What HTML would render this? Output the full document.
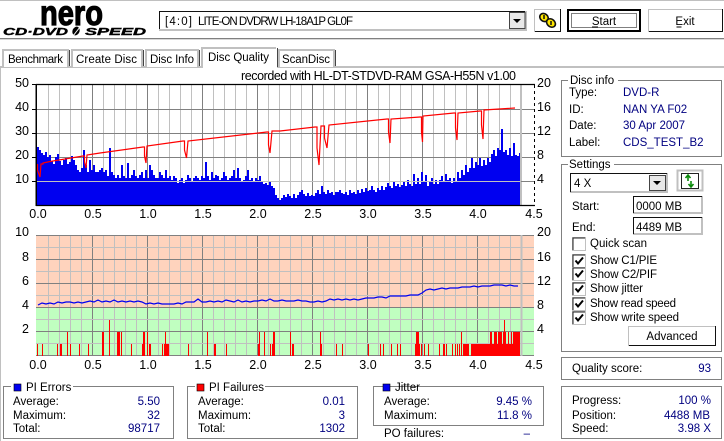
<!DOCTYPE html>
<html><head><meta charset="utf-8"><style>
html,body{margin:0;padding:0;background:#fff;width:724px;height:441px;overflow:hidden}
svg{display:block}
text{font-family:"Liberation Sans",sans-serif;font-size:11.5px;fill:#000}
.v{fill:#000080}
.e{text-anchor:end}
.m{text-anchor:middle}
.a{font-size:12.5px}
.b{fill:#fff;stroke:#808080;stroke-width:1}
</style></head><body>
<svg width="724" height="441" viewBox="0 0 724 441" xmlns="http://www.w3.org/2000/svg">
<defs>
<path id="minor" fill="none" stroke="#c0c0c0" d="M48.5 0v121M59.5 0v121M70.5 0v121M81.5 0v121M103.5 0v121M114.5 0v121M125.5 0v121M136.5 0v121M158.5 0v121M169.5 0v121M180.5 0v121M191.5 0v121M213.5 0v121M224.5 0v121M235.5 0v121M246.5 0v121M268.5 0v121M279.5 0v121M290.5 0v121M301.5 0v121M323.5 0v121M334.5 0v121M345.5 0v121M356.5 0v121M378.5 0v121M389.5 0v121M400.5 0v121M411.5 0v121M433.5 0v121M444.5 0v121M455.5 0v121M466.5 0v121M488.5 0v121M499.5 0v121M510.5 0v121"/>
<path id="major" fill="none" stroke="#808080" d="M92.5 0v121M147.5 0v121M202.5 0v121M257.5 0v121M312.5 0v121M367.5 0v121M422.5 0v121M477.5 0v121"/>
<g id="chk"><rect x="0.5" y="0.5" width="13" height="13" fill="#fff" stroke="#c0c0c0"/><path d="M1 13V1H13" fill="none" stroke="#222"/><path d="M3.5 6.500l2.500 3 5-6" fill="none" stroke="#000" stroke-width="2"/></g>
</defs>

<!-- window frame -->
<rect x="0" y="0" width="724" height="1" fill="#c0c0c0"/>
<rect x="0" y="38" width="724" height="1" fill="#808080"/>
<rect x="0" y="39" width="724" height="1" fill="#d8d8d8"/>
<rect x="0" y="66" width="724" height="2" fill="#c0c0c0"/>
<rect x="0" y="66" width="1" height="375" fill="#c0c0c0"/>

<!-- logo -->
<text x="40" y="25" textLength="63" lengthAdjust="spacingAndGlyphs" style="font-size:35px;font-weight:bold;stroke:#000;stroke-width:1.2px">nero</text>
<text x="3" y="35" textLength="65" lengthAdjust="spacingAndGlyphs" style="font-size:10px;font-weight:bold;font-style:italic;stroke:#000;stroke-width:.4px">CD·DVD</text>
<ellipse cx="76" cy="31" rx="3.500" ry="4.500" transform="rotate(25 76 31)" fill="#000"/>
<path d="M73 36L80 27" stroke="#fff" stroke-width="1"/>
<text x="85" y="35" textLength="61" lengthAdjust="spacingAndGlyphs" style="font-size:10px;font-weight:bold;font-style:italic;stroke:#000;stroke-width:.4px">SPEED</text>

<!-- drive combo -->
<rect x="159" y="11" width="368" height="20" fill="#c0c0c0"/>
<rect x="159" y="11" width="366" height="18" fill="#fff"/>
<path d="M159.500 29V11.500H525" fill="none" stroke="#111"/>
<text x="165" y="25" textLength="27">[4:0]</text>
<text x="198" y="25" textLength="155">LITE-ON DVDRW LH-18A1P GL0F</text>
<rect x="509" y="12" width="16" height="17" fill="#e8e8e8"/>
<path d="M509.500 29V12.500H525M509.500 28.500H525V12" fill="none" stroke="#444"/>
<path d="M513 19h8l-4 4z" fill="#000"/>

<!-- link button -->
<rect x="534.500" y="9.500" width="26" height="22" fill="#fff" stroke="#c0c0c0"/>
<path d="M535 31.500H560.500V9" fill="none" stroke="#111"/>
<g fill="#ffe600" stroke="#111" stroke-width="1.600">
<ellipse cx="544" cy="17.500" rx="4.500" ry="3.800" transform="rotate(40 544 17.500)"/>
<ellipse cx="551" cy="23" rx="4.800" ry="3.800" transform="rotate(40 551 23)"/>
</g>
<path d="M544 15v4M551 21v4" stroke="#111" stroke-width="1.500" fill="none"/>

<!-- start -->
<rect x="568" y="10" width="72" height="21" fill="#fff" stroke="#000" stroke-width="2"/>
<rect x="571.500" y="13.500" width="65" height="14" fill="none" stroke="#000" stroke-dasharray="1 1"/>
<text x="604" y="25" class="m">Start</text>
<path d="M592 27h6" stroke="#000"/>
<!-- exit -->
<rect x="648.500" y="9.500" width="74" height="22" fill="#fff" stroke="#c0c0c0"/>
<path d="M649 31.500H722.500V9" fill="none" stroke="#111"/>
<text x="685" y="25" class="m">Exit</text>
<path d="M676.500 27h5" stroke="#000"/>

<!-- tabs -->
<g fill="#fff" stroke="#c0c0c0" stroke-width="2">
<path d="M3 67V50H68V67"/>
<path d="M72 67V50H142V67"/>
<path d="M146 67V50H198V67"/>
<path d="M279 67V50H334V67"/>
</g>
<path d="M69.500 50V66M143.500 50V66M199.500 50V66M335.500 50V66" stroke="#444" fill="none"/>
<rect x="201" y="47" width="76" height="21" fill="#fff"/>
<path d="M202 68V48H276" fill="none" stroke="#c0c0c0" stroke-width="2"/>
<path d="M277.500 48V67" stroke="#444"/>
<text x="8" y="63" textLength="55">Benchmark</text>
<text x="76" y="63" textLength="61">Create Disc</text>
<text x="150" y="63" textLength="44">Disc Info</text>
<text x="208" y="61" textLength="61">Disc Quality</text>
<text x="282" y="63" textLength="48">ScanDisc</text>

<!-- chart 1 -->
<text x="241" y="80" textLength="275" class="a">recorded with HL-DT-STDVD-RAM GSA-H55N v1.00</text>
<use href="#minor" y="85"/>
<use href="#major" y="85"/>
<path d="M36 109.500H534M36 133.500H534M36 157.500H534" stroke="#808080" fill="none"/>
<path fill="#0000f0" d="M37 206V147h2V150h2V153h2V155h2V152h2V157h2V155h2V161h2V164h2V157h2V154h2V161h2V165h2V160h2V158h2V164h2V162h2V156h2V160h2V165h2V170h2V172h2V168h2V150h2V165h2V172h2V160h2V170h2V165h2V172h2V172h2V170h2V168h2V172h2V170h2V176h2V148h2V172h2V175h2V178h2V175h2V178h2V165h2V176h2V178h2V163h2V178h2V175h2V170h2V176h2V178h2V175h2V172h2V178h2V170h2V178h2V165h2V170h2V175h2V178h2V178h2V172h2V175h2V178h2V170h2V178h2V176h2V180h2V176h2V178h2V183h2V180h2V178h2V183h2V180h2V175h2V178h2V182h2V178h2V176h2V178h2V180h2V176h2V178h2V162h2V176h2V180h2V172h2V178h2V175h2V176h2V180h2V178h2V172h2V176h2V180h2V178h2V176h2V170h2V178h2V168h2V178h2V182h2V180h2V176h2V170h2V180h2V178h2V182h2V178h2V180h2V176h2V182h2V184h2V183h2V185h2V181h2V186h2V188h2V195h2V198h2V200h2V198h2V195h2V197h2V194h2V196h2V198h2V194h2V198h2V195h2V192h2V190h2V194h2V196h2V193h2V196h2V195h2V196h2V193h2V190h2V194h2V186h2V192h2V194h2V190h2V193h2V192h2V195h2V192h2V192h2V190h2V193h2V194h2V192h2V195h2V190h2V193h2V192h2V194h2V190h2V193h2V189h2V192h2V188h2V191h2V190h2V186h2V190h2V192h2V188h2V190h2V186h2V190h2V187h2V183h2V186h2V188h2V182h2V186h2V184h2V187h2V185h2V182h2V186h2V180h2V184h2V186h2V174h2V184h2V178h2V184h2V172h2V182h2V175h2V186h2V182h2V178h2V184h2V180h2V184h2V180h2V176h2V182h2V174h2V180h2V178h2V183h2V178h2V181h2V172h2V178h2V170h2V175h2V165h2V172h2V168h2V158h2V168h2V162h2V165h2V158h2V166h2V160h2V165h2V158h2V162h2V154h2V150h2V156h2V148h2V150h2V129h2V152h2V150h2V155h2V148h2V156h2V143h2V155h2V156h2V153h2V206z"/>
<path d="M36 181.500H521" stroke="#c0c0c0" fill="none"/>
<rect x="520" y="85" width="2" height="121" fill="#c0c0c0"/>
<path d="M534 181.500H521" stroke="#808080"/>
<path fill="none" stroke="#f00" stroke-width="1.200" d="M37.500 164V170L40 177L41 164H43V163L50 161.500L83 156H84.500V162L86 168L87 155L100 153L143 147H144.500V156L146 163L147 146L183 141H184.500V150L186.500 158L188 141L267 132H268.500V145L270 153L272 131L280 131L315 127H317V148L319 165L321 126H324.500V138L327 148L329 125L387 119H388.500V132L390 143L391 119L420 117H421.500V132L422.500 142L423 116L454 113H455.500V128L457 140L458 113L480 111H481.500V125L483 139L484 110L515 108"/>
<path d="M36 84.500H535M36 205.500H535" stroke="#000" fill="none" stroke-width="1.300"/>
<rect x="35.500" y="84" width="1.500" height="122" fill="#000"/>
<path d="M534.500 85V206" stroke="#000" stroke-dasharray="3 3"/>
<path d="M32 84.500h4M32 109.500h4M32 133.500h4M32 157.500h4M32 181.500h4" stroke="#000"/>
<text x="29" y="87" class="a e">50</text><text x="29" y="111" class="a e">40</text><text x="29" y="135" class="a e">30</text><text x="29" y="159" class="a e">20</text><text x="29" y="183" class="a e">10</text>
<text x="537" y="87" class="a">20</text><text x="537" y="111" class="a">16</text><text x="537" y="135" class="a">12</text><text x="537" y="159" class="a">8</text><text x="537" y="183" class="a">4</text>
<text x="38" y="218" class="a m">0.0</text><text x="93" y="218" class="a m">0.5</text><text x="148" y="218" class="a m">1.0</text><text x="203" y="218" class="a m">1.5</text><text x="258" y="218" class="a m">2.0</text><text x="313" y="218" class="a m">2.5</text><text x="368" y="218" class="a m">3.0</text><text x="423" y="218" class="a m">3.5</text><text x="478" y="218" class="a m">4.0</text><text x="534" y="218" class="a m">4.5</text>

<!-- chart 2 -->
<rect x="36" y="235" width="498" height="73" fill="#ffd3bd"/>
<rect x="36" y="308" width="498" height="48" fill="#c0ffc0"/>
<use href="#minor" y="235"/>
<use href="#major" y="235"/>
<path d="M36 247.500H534M36 271.500H534M36 295.500H534M36 319.500H534M36 343.500H534" stroke="#c0c0c0" fill="none"/>
<path d="M36 235.500H534M36 259.500H534M36 283.500H534M36 307.500H534M36 331.500H534M36 355.500H534" stroke="#808080" fill="none"/>
<rect x="520.500" y="235" width="2" height="121" fill="#c0c0c0"/>
<path fill="#f00" d="M37 344h1v12h-1zM42 344h1v12h-1zM57 344h1v12h-1zM60 344h2v12h-2zM70 344h1v12h-1zM79 344h1v12h-1zM88 344h1v12h-1zM67 332h1v24h-1zM102 332h2v24h-2zM109 320h1v36h-1zM117 332h3v24h-3zM121 332h1v24h-1zM131 344h1v12h-1zM142 344h1v12h-1zM143 332h2v24h-2zM147 332h1v24h-1zM149 344h2v12h-2zM162 344h1v12h-1zM165 332h1v24h-1zM164 344h5v12h-5zM188 344h1v12h-1zM207 332h1v24h-1zM214 344h2v12h-2zM226 344h1v12h-1zM258 344h2v12h-2zM259 332h1v24h-1zM264 332h1v24h-1zM270 344h1v12h-1zM272 344h3v12h-3zM273 332h2v24h-2zM290 332h1v24h-1zM292 344h2v12h-2zM320 332h1v24h-1zM321 344h1v12h-1zM336 344h1v12h-1zM342 344h1v12h-1zM368 344h1v12h-1zM380 344h1v12h-1zM383 344h1v12h-1zM391 344h1v12h-1zM397 344h1v12h-1zM400 344h1v12h-1zM415 344h5v12h-5zM416 332h3v24h-3zM421 344h1v12h-1zM424 344h1v12h-1zM428 344h1v12h-1zM439 344h1v12h-1zM443 344h2v12h-2zM446 344h1v12h-1zM452 344h1v12h-1zM455 344h1v12h-1zM457 344h1v12h-1zM459 344h1v12h-1zM461 332h1v24h-1zM463 344h6v12h-6zM471 344h49v12h-49zM490 332h2v12h-2zM494 332h3v12h-3zM498 332h4v12h-4zM503 332h3v12h-3zM504 320h1v12h-1zM508 332h1v12h-1zM511 332h1v12h-1zM513 332h7v12h-7z"/>
<polyline fill="none" stroke="#0000f0" stroke-width="1.200" points="38,305 42,303 46,304 50,303 54,304 58,302 62,303 66,302 70,302 74,303 78,302 82,303 86,302 90,301 94,302 98,300 102,302 106,301 110,302 114,300 118,302 122,301 126,302 130,301 134,302 138,301 142,302 146,304 150,303 154,304 158,303 162,304 166,304 170,304 174,304 178,303 182,304 186,302 190,302 194,302 198,299 202,302 206,302 210,301 214,302 218,301 222,302 226,300 230,301 234,302 238,300 242,302 246,301 250,302 254,301 258,301 262,300 266,301 270,299 274,301 278,301 282,300 286,301 290,301 294,301 298,300 302,301 306,301 310,302 314,302 318,301 322,302 326,301 330,299 334,300 338,299 342,300 346,299 350,300 354,299 358,300 362,299 366,298 370,298 374,298 378,297 382,297 386,298 390,296 394,296 398,296 402,296 406,296 410,295 414,295 418,295 422,293 426,290 430,289 434,290 438,289 442,288 446,289 450,288 454,288 458,288 462,287 466,287 470,287 474,286 478,287 482,286 486,286 490,286 494,285 498,285 502,285 506,286 510,285 514,286 518,286"/>
<text x="29" y="236" class="a e">10</text><text x="29" y="261" class="a e">8</text><text x="29" y="285" class="a e">6</text><text x="29" y="309" class="a e">4</text><text x="29" y="333" class="a e">2</text>
<text x="537" y="236" class="a">20</text><text x="537" y="261" class="a">16</text><text x="537" y="285" class="a">12</text><text x="537" y="309" class="a">8</text><text x="537" y="333" class="a">4</text>
<text x="38" y="369" class="a m">0.0</text><text x="93" y="369" class="a m">0.5</text><text x="148" y="369" class="a m">1.0</text><text x="203" y="369" class="a m">1.5</text><text x="258" y="369" class="a m">2.0</text><text x="313" y="369" class="a m">2.5</text><text x="368" y="369" class="a m">3.0</text><text x="423" y="369" class="a m">3.5</text><text x="478" y="369" class="a m">4.0</text><text x="534" y="369" class="a m">4.5</text>

<!-- bottom groups -->
<rect class="b" x="3.500" y="386.500" width="170" height="52"/>
<rect x="11" y="380" width="62" height="12" fill="#fff"/>
<rect x="14" y="384" width="7" height="7" fill="#0000f0" stroke="#000" stroke-width=".6"/>
<text x="26" y="391">PI Errors</text>
<text x="13" y="405">Average:</text><text x="13" y="419">Maximum:</text><text x="13" y="432">Total:</text>
<text x="160" y="405" class="v e">5.50</text><text x="160" y="419" class="v e">32</text><text x="160" y="432" class="v e">98717</text>

<rect class="b" x="187.500" y="386.500" width="170" height="52"/>
<rect x="195" y="380" width="70" height="12" fill="#fff"/>
<rect x="197" y="384" width="7" height="7" fill="#f00" stroke="#000" stroke-width=".6"/>
<text x="209" y="391">PI Failures</text>
<text x="198" y="405">Average:</text><text x="198" y="419">Maximum:</text><text x="198" y="432">Total:</text>
<text x="345" y="405" class="v e">0.01</text><text x="345" y="419" class="v e">3</text><text x="345" y="432" class="v e">1302</text>

<rect class="b" x="373.500" y="386.500" width="170" height="39"/>
<rect x="380" y="380" width="42" height="6" fill="#fff"/>
<rect x="383" y="384" width="7" height="7" fill="#0000f0" stroke="#000" stroke-width=".6"/>
<text x="395" y="391">Jitter</text>
<text x="384" y="405">Average:</text><text x="384" y="419">Maximum:</text>
<text x="532" y="405" class="v e">9.45 %</text><text x="532" y="419" class="v e">11.8 %</text>
<text x="384" y="437">PO failures:</text><text x="530" y="437" class="v e">–</text>

<!-- disc info -->
<rect class="b" x="561.500" y="80.500" width="160" height="76"/>
<rect x="568" y="75" width="50" height="10" fill="#fff"/>
<text x="570" y="84">Disc info</text>
<text x="569" y="96">Type:</text><text x="569" y="113">ID:</text><text x="569" y="129">Date:</text><text x="569" y="146">Label:</text>
<text x="623" y="96" class="v">DVD-R</text><text x="623" y="113" class="v">NAN YA F02</text><text x="623" y="129" class="v">30 Apr 2007</text><text x="623" y="146" class="v">CDS_TEST_B2</text>

<!-- settings -->
<rect class="b" x="561.500" y="164.500" width="160" height="187"/>
<rect x="568" y="159" width="46" height="10" fill="#fff"/>
<text x="569" y="168">Settings</text>
<rect x="570" y="173" width="98" height="20" fill="#c0c0c0"/>
<rect x="571" y="174" width="95" height="17" fill="#fff"/>
<path d="M570.500 192V173.500H667" fill="none" stroke="#111"/>
<text x="574" y="187">4 X</text>
<rect x="649.500" y="175.500" width="16" height="15" fill="#e8e8e8" stroke="#444"/>
<path d="M653 181h8l-4 4z" fill="#000"/>
<rect x="677.500" y="170.500" width="25" height="20" fill="#fff" stroke="#c0c0c0" stroke-width="2"/>
<rect x="681.500" y="173.500" width="17" height="15" fill="#fff" stroke="#222"/>
<path d="M688 181v-5M685.500 178l2.500-3 2.500 3M691 181v5M688.500 184l2.500 3 2.500-3" fill="none" stroke="#0a8a0a" stroke-width="1.600"/>
<text x="572" y="210">Start:</text><text x="572" y="231">End:</text>
<rect x="633" y="196" width="70" height="18" fill="#c0c0c0"/><rect x="634" y="197" width="67" height="15" fill="#fff"/>
<path d="M633.500 213V196.500H702" fill="none" stroke="#111"/>
<rect x="633" y="217" width="70" height="18" fill="#c0c0c0"/><rect x="634" y="218" width="67" height="15" fill="#fff"/>
<path d="M633.500 234V217.500H702" fill="none" stroke="#111"/>
<text x="636" y="210">0000 MB</text><text x="636" y="231">4489 MB</text>

<rect x="572.500" y="237.500" width="13" height="13" fill="#fff" stroke="#c0c0c0"/><path d="M573 250V238H585" fill="none" stroke="#222"/>
<text x="590" y="247" textLength="57">Quick scan</text>
<use href="#chk" x="572" y="254"/><text x="590" y="264" textLength="67">Show C1/PIE</text>
<use href="#chk" x="572" y="267"/><text x="590" y="278" textLength="67">Show C2/PIF</text>
<use href="#chk" x="572" y="282"/><text x="590" y="292" textLength="53">Show jitter</text>
<use href="#chk" x="572" y="297"/><text x="590" y="307" textLength="86">Show read speed</text>
<use href="#chk" x="572" y="311"/><text x="590" y="321" textLength="89">Show write speed</text>
<rect x="628.500" y="326.500" width="87" height="19" fill="#fff" stroke="#c0c0c0"/>
<path d="M629 345.500H715.500V326" fill="none" stroke="#111"/>
<text x="672" y="340" class="m">Advanced</text>

<!-- quality -->
<rect class="b" x="561.500" y="357.500" width="160" height="22"/>
<text x="572" y="372">Quality score:</text><text x="711" y="372" class="v e">93</text>

<!-- progress -->
<rect class="b" x="561.500" y="386.500" width="160" height="52"/>
<text x="572" y="404">Progress:</text><text x="572" y="419">Position:</text><text x="572" y="432">Speed:</text>
<text x="711" y="404" class="v e">100 %</text><text x="710" y="419" class="v e">4488 MB</text><text x="711" y="432" class="v e">3.98 X</text>
</svg>
</body></html>
